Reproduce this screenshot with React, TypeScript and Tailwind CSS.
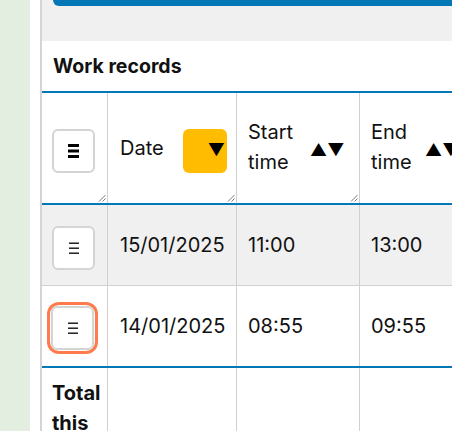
import React from "react";

const Grip = () => (
  <svg className="absolute right-[1px] bottom-[1px]" width="8" height="8" viewBox="0 0 8 8">
    <line x1="7.5" y1="1" x2="1" y2="7.5" stroke="#7a7a7a" strokeWidth="1" />
    <line x1="7.5" y1="4.5" x2="4.5" y2="7.5" stroke="#7a7a7a" strokeWidth="1" />
  </svg>
);

const Bars = ({ bold }: { bold?: boolean }) =>
  bold ? (
    <svg width="11" height="14" viewBox="0 0 11 14">
      <rect x="0" y="0" width="11" height="3" fill="#000" />
      <rect x="0" y="5.5" width="11" height="3" fill="#000" />
      <rect x="0" y="11" width="11" height="3" fill="#000" />
    </svg>
  ) : (
    <svg width="10" height="12" viewBox="0 0 10 12">
      <rect x="0" y="0.5" width="10" height="1.4" fill="#111" />
      <rect x="0" y="5.5" width="10" height="1.4" fill="#111" />
      <rect x="0" y="10.5" width="10" height="1.4" fill="#111" />
    </svg>
  );

const MenuBtn = ({ bold, focus }: { bold?: boolean; focus?: boolean }) => (
  <div className={focus ? "rounded-[9px] p-[1px] ring-[3px] ring-[#ff7a4d] w-fit" : "w-fit"}>
    <div className="w-[43px] h-[44px] rounded-[6px] border-2 border-[#d4d4d4] bg-white flex items-center justify-center">
      <Bars bold={bold} />
    </div>
  </div>
);

export default function App() {
  return (
    <div className="w-[452px] h-[431px] overflow-hidden flex bg-white" style={{ fontFamily: "Inter, 'Noto Sans', sans-serif" }}>
      <div className="w-[30px] shrink-0 bg-[#e4eee0]" />
      <div className="w-[10px] shrink-0 bg-white" />
      <div className="flex-1 min-w-0 border-l-2 border-[#d4d4d4] flex flex-col text-[#111]">
        <div className="h-[41px] bg-[#f0f0f0] pl-[11px] shrink-0">
          <div className="h-[6px] bg-[#0477b5] rounded-bl-[8px] w-[600px]" />
        </div>
        <div className="h-[52px] shrink-0 flex items-center pl-[11px] border-b-2 border-[#0477b5]">
          <span className="font-bold text-[19.5px] pt-[2px]">Work records</span>
        </div>
        <div className="flex flex-col w-[600px] text-[20px]">
          {/* header */}
          <div className="flex h-[112px] shrink-0 border-b-2 border-[#0477b5]">
            <div className="relative w-[66px] shrink-0 border-r border-[#d0d0d0] flex items-center pl-[10px] pt-[5px]">
              <MenuBtn bold />
              <Grip />
            </div>
            <div className="relative w-[129px] shrink-0 border-r border-[#d0d0d0] flex items-center justify-between pl-[12px] pr-[9px]">
              <span>Date</span>
              <div className="mt-[5px] w-[44px] h-[44px] rounded-[6px] bg-[#ffbc00] flex items-center justify-end pr-[2px]">
                <span className="text-[17px] leading-none text-black">▼</span>
              </div>
              <Grip />
            </div>
            <div className="relative w-[123px] shrink-0 border-r border-[#d0d0d0] flex items-center pl-[11px]">
              <span className="leading-[30px] w-[58px] mb-[2px]">Start time</span>
              <span className="text-[17px] leading-none text-black ml-[4px] mt-[4px]">▲▼</span>
              <Grip />
            </div>
            <div className="relative w-[123px] shrink-0 border-r border-[#d0d0d0] flex items-center pl-[11px]">
              <span className="leading-[30px] w-[52px] mb-[2px]">End time</span>
              <span className="text-[17px] leading-none text-black ml-[2px] mt-[4px]">▲▼</span>
              <Grip />
            </div>
          </div>
          {/* row 1 */}
          <div className="flex h-[81px] shrink-0 bg-[#f0f0f0] border-b border-[#d0d0d0]">
            <div className="w-[66px] shrink-0 border-r border-[#d0d0d0] flex items-center pl-[10px] pt-[6px]">
              <MenuBtn />
            </div>
            <div className="w-[129px] shrink-0 border-r border-[#d0d0d0] flex items-center pl-[12px]">15/01/2025</div>
            <div className="w-[123px] shrink-0 border-r border-[#d0d0d0] flex items-center pl-[11px]">11:00</div>
            <div className="w-[123px] shrink-0 border-r border-[#d0d0d0] flex items-center pl-[11px]">13:00</div>
          </div>
          {/* row 2 */}
          <div className="flex h-[82px] shrink-0 bg-white border-b-2 border-[#0477b5]">
            <div className="w-[66px] shrink-0 border-r border-[#d0d0d0] flex items-center pl-[8px] pt-[3px]">
              <MenuBtn focus />
            </div>
            <div className="w-[129px] shrink-0 border-r border-[#d0d0d0] flex items-center pl-[12px]">14/01/2025</div>
            <div className="w-[123px] shrink-0 border-r border-[#d0d0d0] flex items-center pl-[11px]">08:55</div>
            <div className="w-[123px] shrink-0 border-r border-[#d0d0d0] flex items-center pl-[11px]">09:55</div>
          </div>
          {/* total */}
          <div className="flex h-[100px] shrink-0">
            <div className="w-[66px] shrink-0 border-r border-[#d0d0d0] pl-[10px] pt-[10px]">
              <span className="font-bold leading-[30px] block">Total this week</span>
            </div>
            <div className="w-[129px] shrink-0 border-r border-[#d0d0d0]" />
            <div className="w-[123px] shrink-0 border-r border-[#d0d0d0]" />
            <div className="w-[123px] shrink-0 border-r border-[#d0d0d0]" />
          </div>
        </div>
      </div>
    </div>
  );
}
